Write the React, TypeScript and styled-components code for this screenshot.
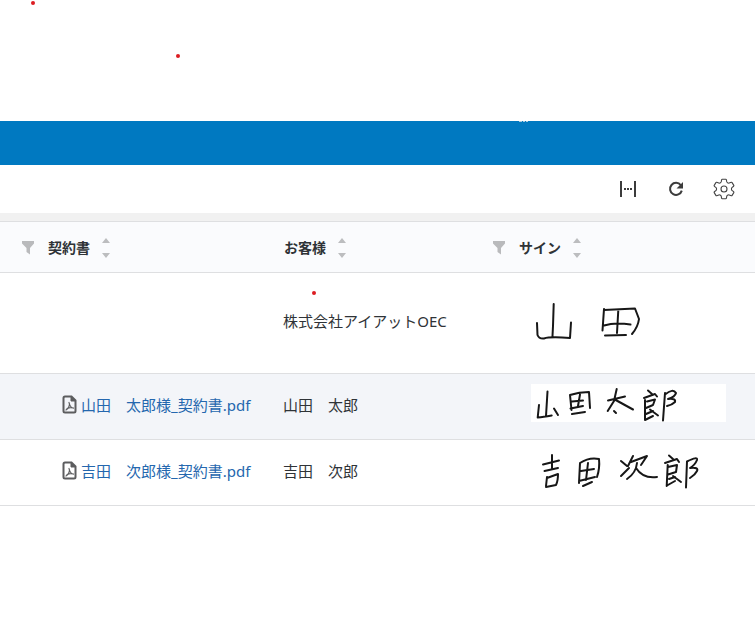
import React from "react";
import styled, { createGlobalStyle } from "styled-components";

const GlobalStyle = createGlobalStyle`
  *, *::before, *::after { box-sizing: border-box; }
  body {
    margin: 0;
    background: #ffffff;
    color: #2f3337;
    font-family: "Noto Sans", "Noto Sans CJK JP", sans-serif;
    font-size: 15px;
    line-height: 24px;
  }
`;

const Page = styled.div`
  position: relative;
  display: flex;
  flex-direction: column;
`;

const TopSpace = styled.div`
  height: 121px;
`;

const Banner = styled.header`
  height: 44px;
  background: #0079c1;
`;

const BannerMark = styled.svg`
  display: block;
  width: 12px;
  height: 2px;
  margin-left: 518px;
`;

const Toolbar = styled.div`
  display: flex;
  justify-content: flex-end;
  align-items: center;
  gap: 24px;
  height: 48px;
  padding-right: 19px;
`;

const IconButton = styled.button`
  display: flex;
  align-items: center;
  justify-content: center;
  width: 24px;
  height: 24px;
  padding: 0;
  border: 0;
  background: none;
  color: #3c3c3c;
  cursor: pointer;
`;

const Divider = styled.div`
  height: 8px;
  background: #f1f1f1;
`;

const Table = styled.table`
  width: 100%;
  table-layout: fixed;
  border-collapse: separate;
  border-spacing: 0;
`;

const Col = styled.col<{ $width?: number }>`
  width: ${(p) => (p.$width ? `${p.$width}px` : "auto")};
`;

const HeadCell = styled.th<{ $first?: boolean }>`
  height: 52px;
  padding: 2px 0 0 ${(p) => (p.$first ? 20 : 8)}px;
  border-top: 1px solid #dedfe1;
  border-bottom: 1px solid #dedfe1;
  background: #fafbfd;
  text-align: left;
`;

const HeadContent = styled.div`
  display: flex;
  align-items: center;
`;

const FilterSlot = styled.div`
  width: 28px;
  display: flex;
`;

const FilterButton = styled(IconButton)`
  width: 16px;
  height: 16px;
`;

const HeadLabel = styled.span`
  font-size: 14px;
  font-weight: 700;
`;

const SortButton = styled(IconButton)`
  width: 10px;
  margin-left: 11px;
`;

const Row = styled.tr<{ $height: number; $shaded?: boolean }>`
  height: ${(p) => p.$height}px;
  background: ${(p) => (p.$shaded ? "#f3f5f9" : "#ffffff")};
`;

const Cell = styled.td<{ $indent: number }>`
  padding: 0 0 4px ${(p) => p.$indent}px;
  border-bottom: 1px solid #dedfe1;
  white-space: nowrap;
`;

const SignatureCell = styled(Cell)<{ $raised?: boolean }>`
  padding-bottom: ${(p) => (p.$raised ? 8 : 4)}px;
`;

const FileLink = styled.a`
  display: flex;
  align-items: center;
  gap: 4px;
  color: #2467ae;
  text-decoration: none;

  svg {
    flex: none;
  }
`;

const SignatureSheet = styled.svg`
  display: block;
  width: 195px;
  height: 38px;
  overflow: visible;
  background: #ffffff;
`;

const Dot = styled.span<{ $x: number; $y: number }>`
  position: absolute;
  left: ${(p) => p.$x}px;
  top: ${(p) => p.$y}px;
  width: 4px;
  height: 4px;
  border-radius: 50%;
  background: #dc1c22;
`;

const FitIcon = () => (
  <svg width="18" height="18" viewBox="0 0 18 18" fill="currentColor">
    <path d="M1 1h2v16H1zM15 1h2v16h-2zM5 8h2v2H5zM8 8h2v2H8zM11 8h2v2h-2z" />
  </svg>
);

const ReloadIcon = () => (
  <svg width="16" height="16" viewBox="0 0 16 16" fill="none" stroke="currentColor" strokeWidth="2">
    <path d="M12.8 4.2A6 6 0 1 0 13.8 9.6" />
    <path d="M15 1v6.5H8.5z" fill="currentColor" stroke="none" />
  </svg>
);

const GearIcon = () => (
  <svg width="22" height="22" viewBox="0 0 22 22" fill="none" stroke="#444444" strokeWidth="1.100" strokeLinejoin="round">
    <path d="M9.3 1.2h3.4q.6 0 .7.6l.4 2.1q.2.5.7.8l.7.4q.5.2 1 0l2.1-.8q.5-.2.8.3l1.7 2.8q.3.5-.2.9l-1.7 1.4q-.4.3-.4.8v1q0 .5.4.8l1.7 1.4q.5.4.2.9l-1.7 2.8q-.3.5-.8.3l-2.1-.8q-.5-.2-1 0l-.7.4q-.5.3-.7.8l-.4 2.1q-.1.6-.7.6H9.3q-.6 0-.7-.6l-.4-2.1q-.2-.5-.7-.8l-.7-.4q-.5-.2-1 0l-2.1.8q-.5.2-.8-.3l-1.7-2.8q-.3-.5.2-.9l1.700-1.400q.4-.3.4-.8v-1q0-.5-.4-.8L1.400 8.300q-.5-.4-.2-.9l1.700-2.800q.3-.5.8-.3l2.100.8q.5.2 1 0l.7-.4q.5-.3.7-.8l.4-2.100q.1-.6.7-.6z" />
    <circle cx="11" cy="11" r="3" />
  </svg>
);

const FunnelIcon = () => (
  <svg width="16" height="16" viewBox="0 0 16 16" fill="#b9babc">
    <path d="M2 1h12v2.500L10 8v6.500L6.500 12V8L2 3.500z" />
  </svg>
);

const SortIcon = () => (
  <svg width="10" height="20" viewBox="0 0 10 20" fill="#bcbdbf">
    <path d="M5 0l4 5H1zM1 15h8l-4 5z" />
  </svg>
);

const PdfIcon = () => (
  <svg width="15" height="19" viewBox="0 0 15 19" fill="none" stroke="#5c5d5f">
    <path d="M3 1.500h6.500L13.500 5.500V16q0 1.500-1.500 1.500H3Q1.500 17.500 1.500 16V3Q1.500 1.500 3 1.500z" strokeWidth="2" />
    <path d="M9 1.500v4.500h4.500z" fill="#5c5d5f" />
    <path d="M7 7.500Q8 9 7 11.500Q6 14 4 15M7.200 8Q8 12.500 11.500 13.200M5 13.500Q8 12 11.500 13" strokeWidth="1.200" strokeLinecap="round" />
  </svg>
);

const Ink = ({ d, name }: { d: string; name: string }) => (
  <SignatureSheet
    role="img"
    aria-label={name}
    viewBox="0 0 195 38"
    fill="none"
    stroke="#171717"
    strokeWidth="2"
    strokeLinecap="round"
    strokeLinejoin="round"
  >
    <path d={d} />
  </SignatureSheet>
);

const INK_YAMADA =
  "M22.700 2L22 24L21.500 34M6 21L6.500 33Q8 37 13 36.500Q19 34.500 39 36L40 20.500M73 7L71.500 28.500M73 8L104 6.500L108 17Q107 25 101 32M87.300 8L86 31M73 23.500Q84 20 99.500 22.500M74 33.500L95 33";
const INK_YAMADA_TARO =
  "M16.500 7.500L15 32M8 21L6.700 33.500Q12 33 20.700 31.500M23 24.500L27 31M39 11L40.500 26M39 11Q48 8 58 8L59 24M49 10.500L47 22M41 17.500L52 16.500M39.500 24.500L52 22M41 30L54 28M77 16.500L94 12.500M85.700 5L83 17L76.700 27M84.700 16L102 25.500M83 27L85 29M117 6.500L121 10M113 14L124 10L126 12.500M114 16L114 36M116 17.500L124 15.500L122 21L115 24M115 30L122 27M119 25.500L127 31.500M114 36L122 32M134 9L132 36.500M134 10.500Q142 4 145 9Q144 13 137 15Q145 14 144 18Q141 21 136 22";
const INK_YOSHIDA_JIRO =
  "M12 12.500L28 8.500M21 3V16M13.500 19L27 16M16 25L15 34M16 26L27 22Q27 29 25 33L15 35M49 11L48 31M49 11Q58 5 68 7Q69 16 66 25M57 11L55 28M50 19L63 17M48 29L64 25M52 34L61 30M90 9L96 14M90 24L98 16M102 4L97 14M100 10L116 4L110 13M106 11Q105 21 96 27M105 16Q112 27 126 25M138 3.500L142 7M134 11L146 7L148 10M136.700 13L135.700 34M137 15L146 13L145 20L137 22.500M138 27L144 25M142 24L150 30M136 33.500L144 29M156 9.500L155 35.500M156 9.500Q167 4 166 8Q164 13 159 16Q168 15 166 19Q164 23 159 26";

const HeaderCell = ({ label, filter, first }: { label: string; filter?: boolean; first?: boolean }) => (
  <HeadCell scope="col" $first={first}>
    <HeadContent>
      <FilterSlot>
        {filter && (
          <FilterButton type="button" aria-label={`${label} フィルター`}>
            <FunnelIcon />
          </FilterButton>
        )}
      </FilterSlot>
      <HeadLabel>{label}</HeadLabel>
      <SortButton type="button" aria-label={`${label} 並べ替え`}>
        <SortIcon />
      </SortButton>
    </HeadContent>
  </HeadCell>
);

const rows = [
  { file: "", customer: "株式会社アイアットOEC", sign: "山田", ink: INK_YAMADA, height: 101 },
  { file: "山田　太郎様_契約書.pdf", customer: "山田　太郎", sign: "山田太郎", ink: INK_YAMADA_TARO, height: 66, shaded: true },
  { file: "吉田　次郎様_契約書.pdf", customer: "吉田　次郎", sign: "吉田次郎", ink: INK_YOSHIDA_JIRO, height: 66 },
];

export default function App() {
  return (
    <>
      <GlobalStyle />
      <Page>
        <TopSpace />
        <Banner>
          <BannerMark viewBox="0 0 12 2" fill="#a9cbe0">
            <path d="M1 0h3v1H1zM5 0h2v1H5zM8 0h2v1H8z" />
          </BannerMark>
        </Banner>
        <Toolbar role="toolbar">
          <IconButton type="button" aria-label="列幅の調整"><FitIcon /></IconButton>
          <IconButton type="button" aria-label="再読み込み"><ReloadIcon /></IconButton>
          <IconButton type="button" aria-label="設定"><GearIcon /></IconButton>
        </Toolbar>
        <Divider />
        <Table>
          <colgroup>
            <Col $width={248} />
            <Col $width={235} />
            <Col />
          </colgroup>
          <thead>
            <tr>
              <HeaderCell label="契約書" filter first />
              <HeaderCell label="お客様" />
              <HeaderCell label="サイン" filter />
            </tr>
          </thead>
          <tbody>
            {rows.map((r) => (
              <Row key={r.sign} $height={r.height} $shaded={r.shaded}>
                <Cell $indent={62}>
                  {r.file && (
                    <FileLink href="#">
                      <PdfIcon />
                      {r.file}
                    </FileLink>
                  )}
                </Cell>
                <Cell $indent={35}>{r.customer}</Cell>
                <SignatureCell $indent={48} $raised={r.shaded}>
                  <Ink d={r.ink} name={r.sign} />
                </SignatureCell>
              </Row>
            ))}
          </tbody>
        </Table>
        <Dot $x={31} $y={1} />
        <Dot $x={176} $y={54} />
        <Dot $x={312} $y={291} />
      </Page>
    </>
  );
}
